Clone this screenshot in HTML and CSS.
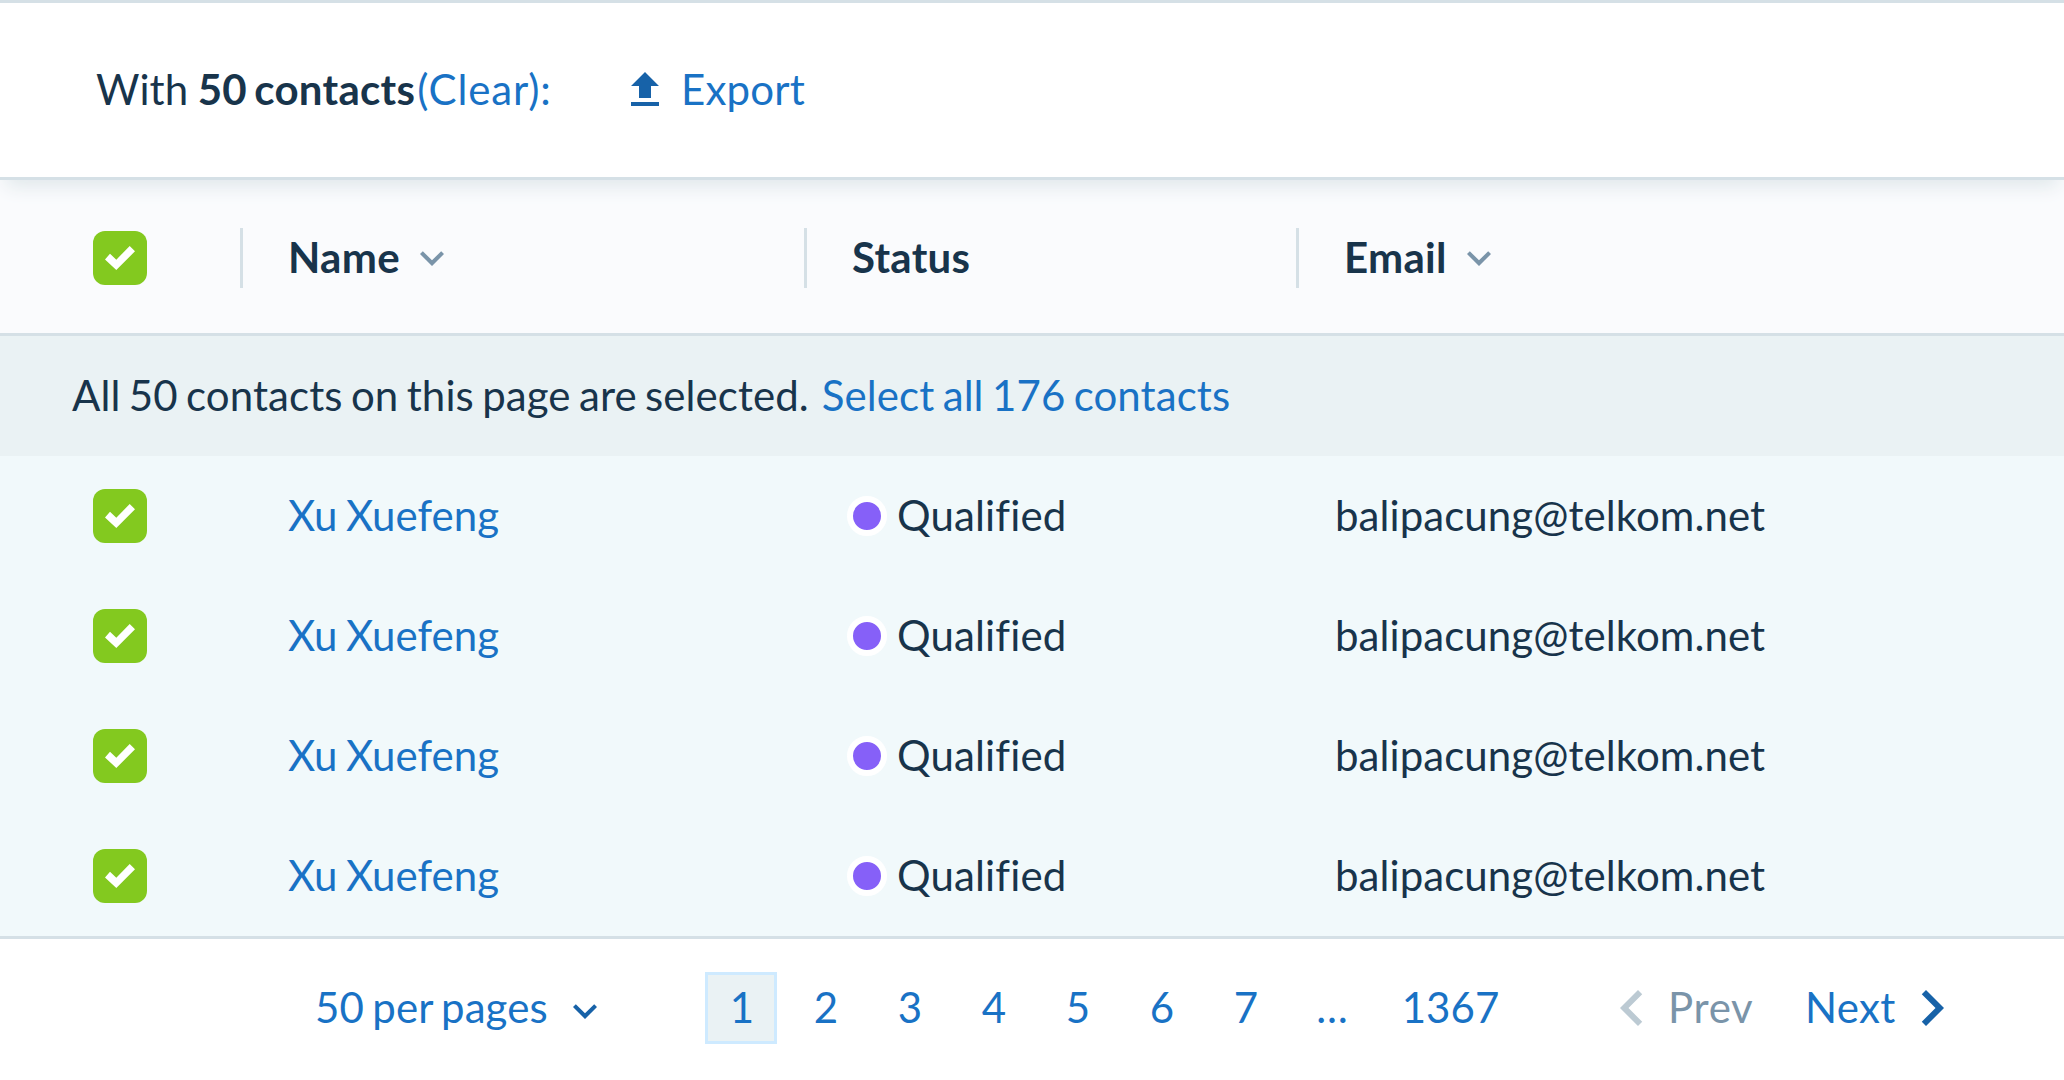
FILE: index.html
```html
<!DOCTYPE html>
<html lang="en">
<head>
<meta charset="utf-8">
<title>Contacts</title>
<link rel="stylesheet" href="styles.css">
</head>
<body>
<svg class="sprite" aria-hidden="true">
  <symbol id="check" viewBox="0 0 54 54"><path d="M12 28.4 17 22.7 23.3 28.7 36.7 15 42 20.3 23.3 39z"/></symbol>
  <symbol id="down" viewBox="0 0 24 24"><path d="M7.41 8.59 12 13.17l4.59-4.58L18 10l-6 6-6-6z"/></symbol>
  <symbol id="left" viewBox="0 0 24 24"><path d="M15.41 7.41 14 6l-6 6 6 6 1.41-1.41L10.83 12z"/></symbol>
  <symbol id="right" viewBox="0 0 24 24"><path d="M10 6 8.59 7.41 13.17 12l-4.58 4.59L10 18l6-6z"/></symbol>
  <symbol id="upload" viewBox="0 0 24 24"><path d="M5 20h14v-2H5zM9 16h6v-6h4l-7-7-7 7h4z"/></symbol>
</svg>
<div class="toolbar">
  <div class="selection">With <b>50 contacts</b><a class="clear">(Clear):</a></div>
  <a class="export"><svg class="icon"><use href="#upload"/></svg><span class="label">Export</span></a>
</div>
<div class="row head">
  <span class="checkbox"><svg><use href="#check"/></svg></span>
  <div class="col"><span class="label">Name</span><svg class="icon"><use href="#down"/></svg></div>
  <div class="col"><span class="label">Status</span></div>
  <div class="col"><span class="label">Email</span><svg class="icon"><use href="#down"/></svg></div>
</div>
<div class="notice"><span>All 50 contacts on this page are selected.</span><a>Select all 176 contacts</a></div>
<div class="row">
  <span class="checkbox"><svg><use href="#check"/></svg></span>
  <a class="name label">Xu Xuefeng</a>
  <div class="status"><i class="dot"></i><span class="label">Qualified</span></div>
  <div class="email label">balipacung@telkom.net</div>
</div>
<div class="row">
  <span class="checkbox"><svg><use href="#check"/></svg></span>
  <a class="name label">Xu Xuefeng</a>
  <div class="status"><i class="dot"></i><span class="label">Qualified</span></div>
  <div class="email label">balipacung@telkom.net</div>
</div>
<div class="row">
  <span class="checkbox"><svg><use href="#check"/></svg></span>
  <a class="name label">Xu Xuefeng</a>
  <div class="status"><i class="dot"></i><span class="label">Qualified</span></div>
  <div class="email label">balipacung@telkom.net</div>
</div>
<div class="row">
  <span class="checkbox"><svg><use href="#check"/></svg></span>
  <a class="name label">Xu Xuefeng</a>
  <div class="status"><i class="dot"></i><span class="label">Qualified</span></div>
  <div class="email label">balipacung@telkom.net</div>
</div>
<div class="footer">
  <a class="per-page"><span class="label">50 per pages</span><svg class="icon"><use href="#down"/></svg></a>
  <div class="pages">
    <a class="page current">1</a><a class="page">2</a><a class="page">3</a><a class="page">4</a><a class="page">5</a><a class="page">6</a><a class="page">7</a><a class="page dots">…</a><a class="page last">1367</a>
  </div>
  <a class="prev"><svg class="arrow"><use href="#left"/></svg><span class="label">Prev</span></a>
  <a class="next"><span class="label">Next</span><svg class="arrow"><use href="#right"/></svg></a>
</div>
</body>
</html>
```
FILE: styles.css
```css
* { box-sizing: border-box; }
body {
  margin: 0;
  height: 1080px;
  overflow: hidden;
  background: #fff;
  color: #18344b;
  font: 42px/60px Lato, sans-serif;
  letter-spacing: 0.07px;
  word-spacing: -2.4px;
  white-space: nowrap;
}
a { color: #1972c5; }
b { letter-spacing: 0.3px; word-spacing: -3.2px; }
svg { display: block; fill: currentColor; flex: none; }
.sprite { position: absolute; width: 0; height: 0; }
.icon { width: 48px; height: 48px; }
.arrow { width: 72px; height: 72px; }
.label { padding-bottom: 2px; }

.toolbar {
  position: relative;
  display: flex;
  align-items: center;
  height: 180px;
  padding-left: 96px;
  border-top: 3px solid #d5e0e6;
  border-bottom: 3px solid #d5e0e6;
  background: #fff;
  box-shadow: 0 12px 18px -6px #dfe7ea;
}
.selection { width: 525px; padding-bottom: 2px; word-spacing: -1.4px; }
.clear { margin-left: 2px; letter-spacing: 0.85px; }
.export { display: flex; align-items: center; gap: 12px; letter-spacing: 0.2px; }
.export .icon { color: #1762a8; }

.row {
  display: grid;
  grid-template-columns: 147px 564px 492px 1fr;
  align-items: center;
  height: 120px;
  padding-left: 93px;
  background: #f1f9fb;
}
.head {
  height: 156px;
  padding-top: 3px;
  border-bottom: 3px solid #d5e0e6;
  background: #fafbfd;
  font-weight: 700;
  letter-spacing: 0.3px;
}
.col {
  display: flex;
  align-items: center;
  gap: 8px;
  height: 60px;
  padding-left: 45px;
  border-left: 3px solid #d5e0e6;
}
.col .icon { color: #7a94a9; }
.checkbox {
  width: 54px;
  height: 54px;
  border-radius: 12px;
  background: #83c91f;
  color: #fff;
}
.checkbox svg { width: 54px; height: 54px; }
.name { padding-left: 48px; }
.status { display: flex; align-items: center; gap: 10px; padding-left: 43px; letter-spacing: 0.15px; }
.dot {
  width: 40px;
  height: 40px;
  border: 6px solid #fff;
  border-radius: 50%;
  background: #8660f8;
}
.email { padding-left: 39px; }

.notice {
  display: flex;
  align-items: center;
  gap: 13px;
  height: 120px;
  padding: 0 0 2px 72px;
  background: #eaf2f4;
}

.footer {
  display: flex;
  align-items: center;
  height: 144px;
  border-top: 3px solid #d5e0e6;
  padding: 0 0 3px 315px;
}
.per-page { display: flex; align-items: center; justify-content: space-between; width: 294px; }
.per-page .icon { margin-top: 6px; color: #1762a8; }
.pages { display: flex; gap: 12px; width: 891px; margin-left: 96px; }
.page { width: 72px; height: 72px; padding-left: 2px; line-height: 70px; text-align: center; }
.current { border: 3px solid #ceeaff; background: #eaf2f4; line-height: 64px; }
.dots { padding-left: 6px; }
.last { width: 145px; }
.prev, .next { display: flex; align-items: center; }
.prev { width: 209px; color: #7a94a9; letter-spacing: 0.7px; }
.prev .arrow { color: #bccad3; }
.next { width: 163px; justify-content: space-between; letter-spacing: 0.3px; }
.next .arrow { color: #1762a8; }
```
